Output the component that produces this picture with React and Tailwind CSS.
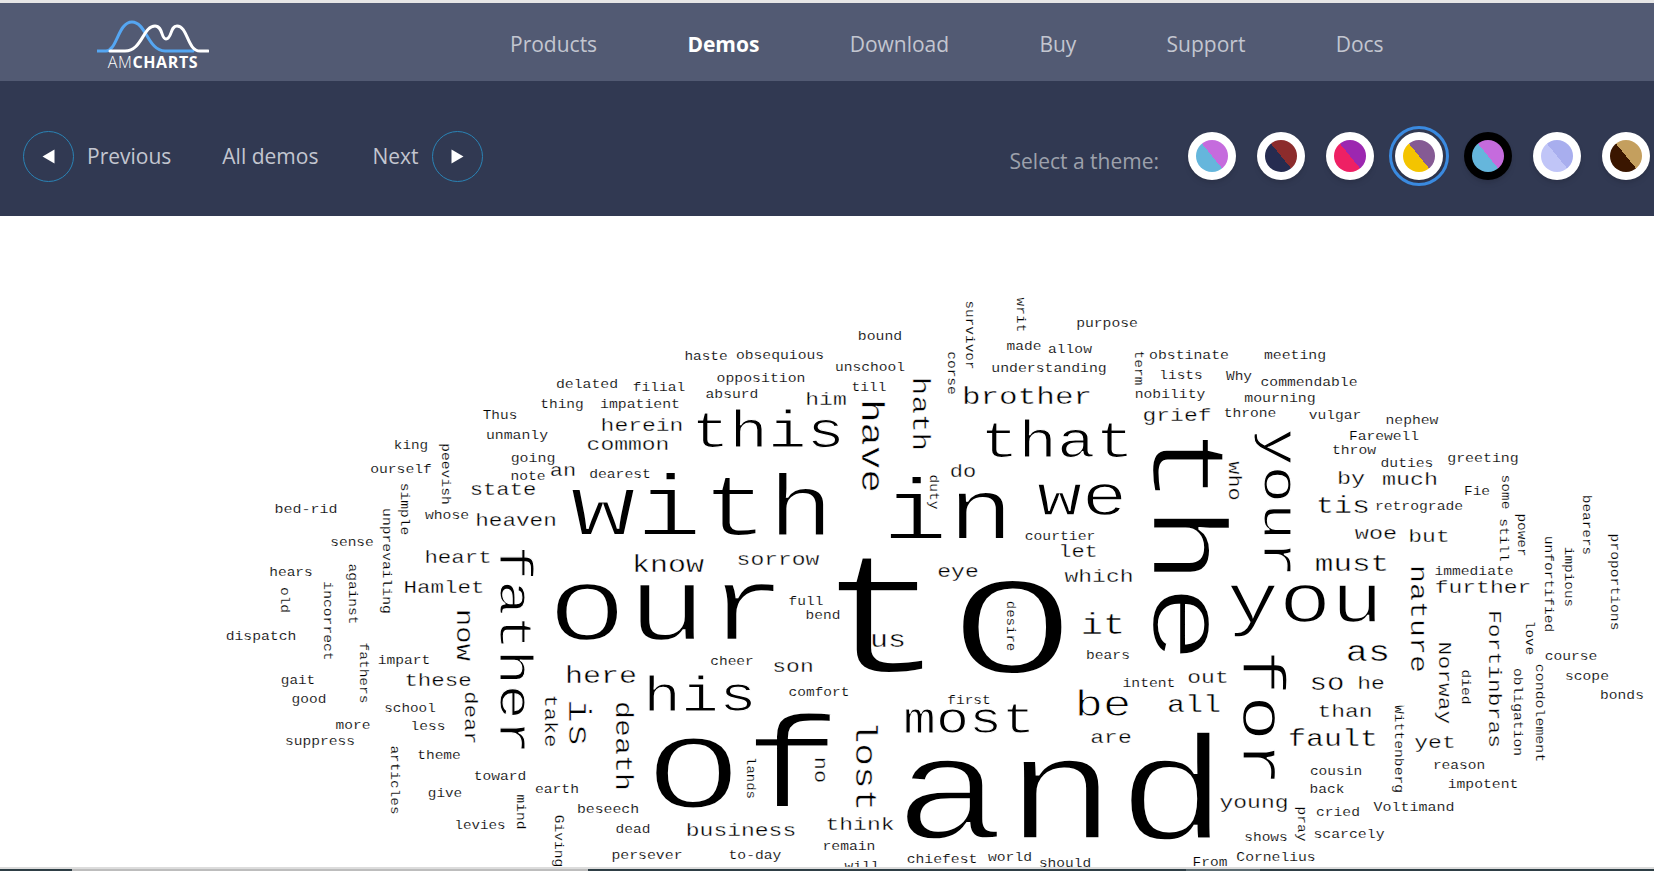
import React from "react";

const navItems = ["Products", "Demos", "Download", "Buy", "Support", "Docs"];

const themes = [
	{ id: 1, ring: "bg-white", fill: "bg-[linear-gradient(51deg,#65b6dc_50%,#c56bdd_50%)]" },
	{ id: 2, ring: "bg-white", fill: "bg-[linear-gradient(51deg,#262c50_50%,#8c2c2c_50%)]" },
	{ id: 3, ring: "bg-white", fill: "bg-[linear-gradient(51deg,#ee2064_50%,#9c27b0_50%)]" },
	{ id: 4, ring: "bg-white", fill: "bg-[linear-gradient(51deg,#f4c400_50%,#855a94_50%)]", selected: true },
	{ id: 5, ring: "bg-black", fill: "bg-[linear-gradient(51deg,#65b6dc_50%,#c56bdd_50%)]" },
	{ id: 6, ring: "bg-white", fill: "bg-[linear-gradient(51deg,#c0c5f7_50%,#a8aeee_50%)]" },
	{ id: 7, ring: "bg-white", fill: "bg-[linear-gradient(51deg,#3a1600_50%,#c49f5e_50%)]" },
];

// word, centre x, centre y (page coordinates), font size, rotated
const words = [
	["to", 947, 627, 218],
	["and", 1061, 800, 186],
	["of", 743, 773, 165],
	["our", 667, 612, 133],
	["the", 1181, 545, 132, 1],
	["with", 702, 512, 110],
	["in", 948, 516, 110],
	["you", 1305, 604, 87],
	["for", 1259, 718, 76, 1],
	["we", 1082, 499, 75],
	["this", 768, 433, 64],
	["that", 1057, 443, 64],
	["his", 700, 698, 63],
	["your", 1277, 503, 62, 1],
	["father", 512, 650, 58, 1],
	["most", 969, 721, 55],
	["be", 1103, 706, 47],
	["is", 577, 723, 40, 1],
	["have", 870, 446, 39, 1],
	["lost", 864, 766, 38, 1],
	["as", 1368, 653, 37],
	["it", 1103, 626, 37],
	["brother", 1027, 397, 31],
	["hath", 920, 414, 31, 1],
	["must", 1352, 564, 31],
	["know", 668, 566, 30],
	["death", 622, 746, 30, 1],
	["here", 601, 677, 30],
	["us", 888, 641, 30],
	["tis", 1343, 507, 30],
	["nature", 1417, 619, 30, 1],
	["all", 1194, 706, 30],
	["fault", 1333, 740, 30],
	["now", 463, 635, 29, 1],
	["so", 1327, 684, 29],
	["sorrow", 778, 561, 23],
	["him", 826, 401, 23],
	["herein", 642, 427, 23],
	["common", 628, 446, 23],
	["heaven", 516, 521, 22.7],
	["state", 503, 491, 22.2],
	["heart", 458, 558, 22.4],
	["Hamlet", 444, 588, 22.5],
	["these", 438, 681, 22.4],
	["an", 563, 472, 22],
	["dear", 469, 718, 22.2, 1],
	["take", 549, 721, 22, 1],
	["grief", 1177, 417, 23],
	["who", 1233, 481, 22, 1],
	["by", 1351, 479, 23.5],
	["much", 1410, 481, 23.4],
	["woe", 1376, 534, 23.5],
	["but", 1429, 538, 23],
	["further", 1483, 589, 23],
	["out", 1208, 679, 23],
	["he", 1371, 685, 23],
	["than", 1345, 713, 23],
	["are", 1111, 739, 23],
	["son", 793, 668, 23],
	["eye", 958, 573, 23],
	["which", 1099, 578, 23],
	["let", 1078, 553, 22],
	["do", 963, 473, 22],
	["no", 819, 770, 22, 1],
	["business", 741, 832, 23],
	["think", 860, 826, 23],
	["young", 1254, 804, 23],
	["yet", 1435, 744, 23],
	["Norway", 1443, 683, 23, 1],
	["Fortinbras", 1493, 679, 23, 1],
	["delated", 587, 384, 14.8],
	["filial", 659, 387, 14.6],
	["thing", 562, 404, 14.5],
	["impatient", 640, 404, 14.8],
	["Thus", 500, 415, 14.4],
	["unmanly", 517, 435, 14.8],
	["king", 411, 445, 14.3],
	["ourself", 401, 469, 14.7],
	["peevish", 445, 474, 14.7, 1],
	["simple", 404, 509, 14.6, 1],
	["going", 533, 458, 14.9],
	["note", 528, 476, 14.6],
	["dearest", 620, 474, 14.7],
	["whose", 447, 515, 14.7],
	["bed-rid", 306, 509, 15],
	["sense", 352, 542, 14.5],
	["unprevailing", 386, 561, 14.7, 1],
	["hears", 291, 572, 14.5],
	["against", 352, 594, 14.5, 1],
	["old", 284, 600, 14.5, 1],
	["incorrect", 327, 621, 14.7, 1],
	["dispatch", 261, 636, 14.7],
	["fathers", 363, 673, 14.5, 1],
	["impart", 404, 660, 14.6],
	["gait", 298, 680, 14.3],
	["good", 309, 699, 14.5],
	["school", 410, 708, 14.3],
	["less", 428, 726, 14.5],
	["more", 353, 725, 14.5],
	["suppress", 320, 741, 14.6],
	["theme", 439, 755, 14.5],
	["articles", 394, 780, 14.4, 1],
	["toward", 500, 776, 14.6],
	["give", 445, 793, 14.3],
	["earth", 557, 789, 14.6],
	["mind", 520, 812, 14.5, 1],
	["levies", 480, 825, 14.2],
	["beseech", 608, 809, 14.8],
	["Giving", 558, 841, 14.6, 1],
	["dead", 633, 829, 14.5],
	["persever", 647, 855, 14.8],
	["corse", 951, 373, 14.5, 1],
	["survivor", 969, 335, 14.4, 1],
	["writ", 1020, 315, 14.5, 1],
	["purpose", 1107, 323, 14.7],
	["bound", 880, 336, 14.8],
	["made", 1024, 346, 14.5],
	["allow", 1070, 349, 14.6],
	["haste", 706, 356, 14.4],
	["obsequious", 780, 355, 14.7],
	["unschool", 870, 367, 14.6],
	["understanding", 1049, 368, 14.8],
	["term", 1138, 368, 14.5, 1],
	["opposition", 761, 378, 14.8],
	["till", 869, 387, 14.5],
	["absurd", 732, 394, 14.7],
	["nobility", 1170, 394, 14.7],
	["obstinate", 1189, 355, 14.8],
	["lists", 1181, 375, 14.5],
	["Why", 1239, 376, 14.5],
	["meeting", 1295, 355, 14.8],
	["commendable", 1309, 382, 14.7],
	["mourning", 1280, 398, 14.9],
	["throne", 1250, 413, 14.6],
	["vulgar", 1335, 415, 14.6],
	["nephew", 1412, 420, 14.7],
	["Farewell", 1384, 436, 14.6],
	["throw", 1354, 450, 14.7],
	["duties", 1407, 463, 14.7],
	["greeting", 1483, 458, 14.9],
	["Fie", 1477, 491, 14.5],
	["some", 1505, 492, 14.5, 1],
	["retrograde", 1419, 506, 14.7],
	["still", 1503, 540, 14.5, 1],
	["power", 1521, 535, 14.4, 1],
	["immediate", 1474, 571, 14.6],
	["unfortified", 1548, 584, 14.6, 1],
	["impious", 1568, 577, 14.4, 1],
	["bearers", 1586, 525, 14.4, 1],
	["proportions", 1614, 582, 14.7, 1],
	["bears", 1108, 655, 14.6],
	["intent", 1149, 683, 14.7],
	["first", 969, 700, 14.5],
	["comfort", 819, 692, 14.5],
	["cheer", 732, 661, 14.5],
	["full", 806, 601, 14.5],
	["bend", 823, 615, 14.5],
	["courtier", 1060, 536, 14.7],
	["duty", 933, 492, 14.5, 1],
	["desire", 1011, 626, 14, 1],
	["lands", 751, 778, 14, 1],
	["remain", 849, 846, 14.7],
	["to-day", 755, 855, 14.7],
	["will", 862, 866, 14.5],
	["chiefest", 942, 859, 14.7],
	["world", 1010, 857, 14.7],
	["should", 1065, 863, 14.5],
	["From", 1210, 862, 14.5],
	["Cornelius", 1276, 857, 14.7],
	["shows", 1266, 837, 14.5],
	["pray", 1301, 824, 14.5, 1],
	["scarcely", 1349, 834, 14.8],
	["cried", 1338, 812, 14.6],
	["Voltimand", 1414, 807, 15],
	["impotent", 1483, 784, 14.7],
	["back", 1327, 789, 14.5],
	["cousin", 1336, 771, 14.5],
	["reason", 1459, 765, 14.5],
	["Wittenberg", 1398, 749, 14.7, 1],
	["died", 1465, 687, 14.5, 1],
	["love", 1529, 638, 14.3, 1],
	["obligation", 1517, 712, 14.7, 1],
	["condolement", 1539, 713, 14.9, 1],
	["course", 1571, 656, 14.6],
	["scope", 1587, 676, 14.6],
	["bonds", 1622, 695, 14.6],
];

const CANVAS_TOP = 216;

const Logo = () => (
	<div className="flex flex-col items-center w-[112px]">
		<svg width="112" height="33" viewBox="17 18 112 33" fill="none">
			<path d="M17 49H26C37 49 38 20 52 20C66 20 68 49 85 49H113" stroke="#55a6f2" strokeWidth="3" strokeLinecap="round" />
			<path d="M30 49H45C62 49 63 24 75 24C83 24 81 37 86 37C92 37 90 24 97 24C108 24 107 49 120 49H128" stroke="#ffffff" strokeWidth="3" strokeLinecap="round" />
		</svg>
		<div className="mt-[1px] text-[16px] leading-[16px] tracking-[0.6px] text-white font-['Open_Sans',sans-serif]">
			<span className="font-light">AM</span>
			<span className="font-bold">CHARTS</span>
		</div>
	</div>
);

const RoundArrow = ({ flip }) => (
	<div className="flex h-[51px] w-[51px] items-center justify-center rounded-full border border-[#2a83b5]">
		<svg width="13" height="15" viewBox="0 0 13 15" className={flip ? "rotate-180" : ""}>
			<polygon points="0.5,0.5 12.5,7.5 0.5,14.5" fill="#ffffff" />
		</svg>
	</div>
);

// Courier New has a low x-height and thin strokes, Liberation Mono only shares its widths
const Word = ({ text, x, y, size, rotated }) => {
	const small = size < 20;
	const squash = small ? 0.88 : 0.8;
	let thin = 0.012;
	if (size >= 40) thin = 0.022;
	else if (size >= 20) thin = 0.016;
	return (
		<span
			className="absolute whitespace-nowrap leading-none text-black"
			style={{
				left: x,
				top: y - CANVAS_TOP + (small && !rotated ? 1 : 0),
				fontSize: size,
				WebkitTextStroke: `${size * thin}px #ffffff`,
				transform: `translate(-50%, -50%)${rotated ? " rotate(90deg)" : ""} scaleY(${squash})`,
			}}>
			{text}
		</span>
	);
};

const App = () => {
	return (
		<div className="flex h-[871px] w-[1654px] flex-col overflow-hidden bg-white font-['Open_Sans',sans-serif]">
			<div className="h-[3px] bg-[#e6e6e6]" />
			<nav className="flex h-[78px] items-center bg-[#525a73] pt-[5px]">
				<div className="ml-[97px]">
					<Logo />
				</div>
				<ul className="ml-[301px] flex items-center gap-[90.25px] text-[21px] text-[#c3c6d0]">
					{navItems.map((item) => (
						<li key={item} className={item === "Demos" ? "font-bold text-white" : ""}>
							{item}
						</li>
					))}
				</ul>
			</nav>
			<div className="flex h-[135px] items-center justify-between bg-[#313952] pl-[23px] pr-[4px] pt-[15px] text-[21px] text-[#c3c6d0]">
				<div className="flex items-center">
					<RoundArrow flip />
					<span className="ml-[13px] mt-[1px]">Previous</span>
					<span className="ml-[51px] mt-[1px]">All demos</span>
					<span className="ml-[54px] mt-[1px]">Next</span>
					<span className="ml-[14px]">
						<RoundArrow />
					</span>
				</div>
				<div className="flex items-center">
					<span className="mr-[29px] mt-[12px] text-[#9da1ac]">Select a theme:</span>
					<div className="flex items-center gap-[21px]">
						{themes.map((t) => (
							<div key={t.id} className={`h-[48px] w-[48px] rounded-full p-[8px] shadow-md ${t.ring} ${t.selected ? "outline-[3px] outline-offset-[3px] outline-[#3a8ae0]" : ""}`}>
								<div className={`h-full w-full rounded-full ${t.fill}`} />
							</div>
						))}
					</div>
				</div>
			</div>
			<div className="relative flex-1 overflow-hidden font-['Liberation_Mono','Courier_New',monospace]">
				{words.map(([text, x, y, size, rotated]) => (
					<Word key={text} text={text} x={x} y={y} size={size} rotated={rotated} />
				))}
			</div>
			<div className="h-[2px] bg-[#dcdcdc]" />
			<div className="flex h-[2px] bg-[#bdbdbd]">
				<div className="w-[72px] bg-[#2e3e45]" />
				<div className="ml-[516px] w-[598px] bg-[#2e3e45]" />
				<div className="w-[74px] bg-[#5a6a70]" />
				<div className="flex-1 bg-[#2e3e45]" />
			</div>
		</div>
	);
};

export default App;
